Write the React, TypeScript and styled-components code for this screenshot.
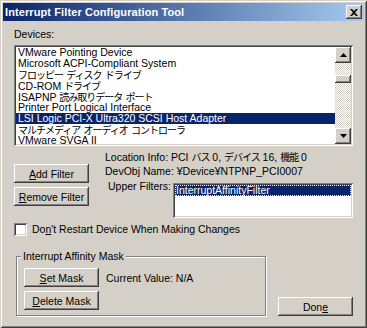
import React from "react";
import styled, { createGlobalStyle } from "styled-components";

const GlobalStyle = createGlobalStyle`
  html, body { margin: 0; padding: 0; background: #d4d0c8; }
  body {
    font-family: "Liberation Sans", "Noto Sans CJK JP", sans-serif;
    font-size: 10.5px;
    color: #000;
  }
`;

const raised = `box-shadow: inset -1px -1px #404040, inset 1px 1px #ffffff, inset -2px -2px #808080, inset 2px 2px #d4d0c8;`;
const sunken = `box-shadow: inset 1px 1px #808080, inset -1px -1px #ffffff, inset 2px 2px #404040, inset -2px -2px #d4d0c8;`;

const Window = styled.div`
  width: 367px;
  height: 328px;
  box-sizing: border-box;
  padding: 3px;
  background: #d4d0c8;
  box-shadow: inset 1px 1px #d4d0c8, inset -1px -1px #404040, inset 2px 2px #ffffff, inset -2px -2px #808080;
  display: flex;
  flex-direction: column;
`;

const TitleBar = styled.div`
  height: 18px;
  flex: none;
  display: flex;
  align-items: center;
  justify-content: space-between;
  padding: 0 2px;
  background: linear-gradient(to right, #0a246a, #a6caf0);
`;

const TitleText = styled.div`
  color: #fff;
  font-weight: bold;
  font-size: 11px;
  letter-spacing: 0.1px;
  white-space: nowrap;
`;

const CloseButton = styled.div`
  width: 16px;
  height: 14px;
  background: #d4d0c8;
  ${raised}
  display: grid;
  place-items: center;
`;

const Body = styled.div`
  flex: 1;
  display: flex;
  flex-direction: column;
  padding: 0 11px;
`;

const Label = styled.div`
  margin-top: 7px;
  line-height: 13px;
  height: 13px;
`;

const ListBox = styled.div<{ $h: number }>`
  box-sizing: border-box;
  height: ${(p) => p.$h}px;
  padding: 2px;
  background: #fff;
  ${sunken}
  display: flex;
`;

const DeviceList = styled(ListBox)`
  margin-top: 4px;
`;

const Rows = styled.div`
  flex: 1;
  overflow: hidden;
`;

const Row = styled.div<{ $selected?: boolean }>`
  height: 11px;
  line-height: 11px;
  padding-left: 2px;
  white-space: nowrap;
  background: ${(p) => (p.$selected ? "#0a246a" : "transparent")};
  color: ${(p) => (p.$selected ? "#fff" : "#000")};
`;

const Jp = styled.span`
  font-family: "Noto Sans CJK JP", sans-serif;
  font-size: 10px;
  letter-spacing: -1px;
  word-spacing: 2px;
`;

const ScrollBar = styled.div`
  width: 16px;
  display: flex;
  flex-direction: column;
`;

const ScrollArrow = styled.div`
  width: 16px;
  height: 16px;
  flex: none;
  background: #d4d0c8;
  ${raised}
  display: grid;
  place-items: center;
`;

const Track = styled.div`
  flex: 1;
  background-image: conic-gradient(#ffffff 25%, #d4d0c8 0 50%, #ffffff 0 75%, #d4d0c8 0);
  background-size: 2px 2px;
`;

const Thumb = styled.div`
  margin-top: 12px;
  height: 8px;
  background: #d4d0c8;
  ${raised}
`;

const Middle = styled.div`
  display: flex;
`;

const LeftCol = styled.div`
  width: 91px;
  flex: none;
  padding-top: 18px;
  display: flex;
  flex-direction: column;
  gap: 4px;
`;

const RightCol = styled.div`
  flex: 1;
  padding-top: 5px;
  display: flex;
  flex-direction: column;
`;

const InfoLine = styled.div<{ $gap?: number }>`
  line-height: 12px;
  height: 12px;
  margin-top: ${(p) => p.$gap ?? 0}px;
  white-space: nowrap;
`;

const FilterRow = styled.div`
  display: flex;
  margin-top: 3px;
`;

const FilterLabel = styled.div`
  padding-left: 3px;
  line-height: 12px;
  white-space: nowrap;
`;

const FilterList = styled(ListBox)`
  margin-left: auto;
  margin-top: 3px;
  width: 180px;
`;

const FocusRow = styled(Row)`
  flex: 1;
  outline: 1px dotted #ffff99;
  outline-offset: -1px;
  padding-left: 1px;
`;

const Button = styled.div`
  width: 75px;
  height: 19px;
  box-sizing: border-box;
  background: #d4d0c8;
  ${raised}
  display: flex;
  align-items: center;
  justify-content: center;
  white-space: nowrap;
  flex: none;
`;

const CheckRow = styled.div`
  display: flex;
  align-items: center;
  margin-top: 5px;
`;

const CheckBox = styled.div`
  width: 13px;
  height: 13px;
  background: #fff;
  ${sunken}
`;

const CheckLabel = styled.div`
  margin-left: 5px;
  line-height: 13px;
`;

const Bottom = styled.div`
  display: flex;
  align-items: flex-end;
  margin-top: 20px;
`;

const GroupBox = styled.div`
  position: relative;
  box-sizing: border-box;
  margin-left: 2px;
  width: 250px;
  height: 60px;
  border: 1px solid #808080;
  box-shadow: inset 1px 1px #ffffff, 1px 1px #ffffff;
  padding: 11px 0 0 7px;
  display: flex;
  flex-direction: column;
  gap: 4px;
`;

const Legend = styled.div`
  position: absolute;
  top: -7px;
  left: 4px;
  padding: 0 2px;
  line-height: 13px;
  background: #d4d0c8;
  white-space: nowrap;
`;

const GroupRow = styled.div`
  display: flex;
  align-items: center;
`;

const ValueText = styled.div`
  margin-left: 7px;
  white-space: nowrap;
`;

const DoneButton = styled(Button)`
  margin-left: auto;
`;

const Triangle = ({ up }: { up?: boolean }) => (
  <svg width="7" height="4" viewBox="0 0 7 4">
    <path d={up ? "M3.5 0 L7 4 L0 4 Z" : "M0 0 L7 0 L3.5 4 Z"} fill="#000" />
  </svg>
);

const devices: { text: React.ReactNode; selected?: boolean }[] = [
  { text: "VMware Pointing Device" },
  { text: "Microsoft ACPI-Compliant System" },
  { text: <Jp>フロッピー ディスク ドライブ</Jp> },
  { text: <>CD-ROM <Jp>ドライブ</Jp></> },
  { text: <>ISAPNP <Jp>読み取りデータ ポート</Jp></> },
  { text: "Printer Port Logical Interface" },
  { text: "LSI Logic PCI-X Ultra320 SCSI Host Adapter", selected: true },
  { text: <Jp>マルチメディア オーディオ コントローラ</Jp> },
  { text: "VMware SVGA II" },
];

export default function App() {
  return (
    <>
      <GlobalStyle />
      <Window>
        <TitleBar>
          <TitleText>Interrupt Filter Configuration Tool</TitleText>
          <CloseButton>
            <svg width="8" height="7" viewBox="0 0 8 7">
              <path d="M0 0 L2 0 L4 2 L6 0 L8 0 L5 3.5 L8 7 L6 7 L4 5 L2 7 L0 7 L3 3.5 Z" fill="#000" />
            </svg>
          </CloseButton>
        </TitleBar>
        <Body>
          <Label>Devices:</Label>
          <DeviceList $h={101}>
            <Rows>
              {devices.map((d, i) => (
                <Row key={i} $selected={d.selected}>
                  {d.text}
                </Row>
              ))}
            </Rows>
            <ScrollBar>
              <ScrollArrow>
                <Triangle up />
              </ScrollArrow>
              <Track>
                <Thumb />
              </Track>
              <ScrollArrow>
                <Triangle />
              </ScrollArrow>
            </ScrollBar>
          </DeviceList>
          <Middle>
            <LeftCol>
              <Button>
                <span><u>A</u>dd Filter</span>
              </Button>
              <Button>
                <span><u>R</u>emove Filter</span>
              </Button>
            </LeftCol>
            <RightCol>
              <InfoLine>
                Location Info: PCI <Jp>バス</Jp> 0, <Jp>デバイス</Jp> 16, <Jp>機能</Jp> 0
              </InfoLine>
              <InfoLine $gap={2}>DevObj Name: ¥Device¥NTPNP_PCI0007</InfoLine>
              <FilterRow>
                <FilterLabel>Upper Filters:</FilterLabel>
                <FilterList $h={35}>
                  <FocusRow $selected>InterruptAffinityFilter</FocusRow>
                </FilterList>
              </FilterRow>
            </RightCol>
          </Middle>
          <CheckRow>
            <CheckBox />
            <CheckLabel>
              Do<u>n</u>'t Restart Device When Making Changes
            </CheckLabel>
          </CheckRow>
          <Bottom>
            <GroupBox>
              <Legend>Interrupt Affinity Mask</Legend>
              <GroupRow>
                <Button>
                  <span><u>S</u>et Mask</span>
                </Button>
                <ValueText>Current Value: N/A</ValueText>
              </GroupRow>
              <Button>
                <span><u>D</u>elete Mask</span>
              </Button>
            </GroupBox>
            <DoneButton>
              <span>Don<u>e</u></span>
            </DoneButton>
          </Bottom>
        </Body>
      </Window>
    </>
  );
}
